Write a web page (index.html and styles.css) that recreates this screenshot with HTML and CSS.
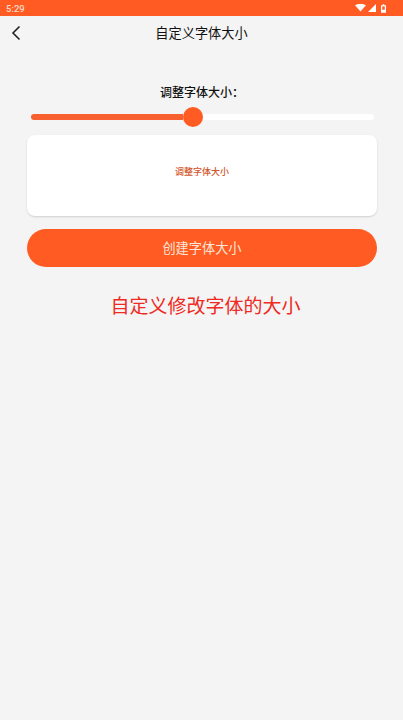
FILE: index.html
```html
<!DOCTYPE html>
<html lang="zh-CN">
<head>
    <meta charset="UTF-8">
    <meta name="viewport" content="width=device-width, initial-scale=1.0">
    <title>自定义字体大小</title>
    <link rel="stylesheet" href="styles.css">
</head>
<body>
    <div class="status-bar">
        <span class="time">5:29</span>
        <div class="status-icons">
            <svg width="11" height="8" viewBox="0 0 13 10" preserveAspectRatio="none"><path d="M0 1.600C1.800.5 4 0 6.500 0S11.200.5 13 1.600L6.500 9.500z" fill="#fff"/></svg>
            <svg class="signal" width="8" height="8" viewBox="0 0 9 9"><path d="M9 0V9H0z" fill="#fff"/></svg>
            <svg width="5" height="9" viewBox="0 0 6 10"><path d="M2 0H4V1H6V10H0V1H2z" fill="#fff"/><rect x="1.500" y="2.500" width="3" height="4" fill="#ff5b22"/></svg>
        </div>
    </div>
    <div class="nav-bar">
        <svg class="back" width="10" height="16" viewBox="0 0 10 16"><path d="M8.500 1.500L2 8l6.500 6.500" fill="none" stroke="#222" stroke-width="1.600"/></svg>
        <h1 class="nav-title">自定义字体大小</h1>
    </div>
    <div class="content">
        <p class="slider-label">调整字体大小：</p>
        <div class="slider">
            <div class="slider-fill"></div>
            <div class="slider-thumb"></div>
            <div class="slider-rest"></div>
        </div>
        <div class="preview-card">
            <span class="preview-text">调整字体大小</span>
        </div>
        <button class="create-btn">创建字体大小</button>
        <p class="hint">自定义修改字体的大小</p>
    </div>
</body>
</html>
```

FILE: styles.css
```css
* {
    box-sizing: border-box;
}
body {
    margin: 0;
    height: 720px;
    overflow: hidden;
    background: #f4f4f4;
    font-family: "Noto Sans CJK SC", "Liberation Sans", sans-serif;
}
.status-bar {
    height: 16px;
    background: #ff5b22;
    display: flex;
    justify-content: space-between;
    align-items: center;
    padding: 0 17px 0 6px;
    color: #f6d9c6;
}
.time {
    font-family: Roboto, sans-serif;
    font-size: 9.500px;
    font-weight: 500;
}
.status-icons {
    display: flex;
    align-items: center;
    gap: 5px;
}
.signal {
    margin: 0 0 0 -3px;
}
.nav-bar {
    height: 34px;
    padding-bottom: 2px;
    display: flex;
    align-items: center;
    justify-content: center;
    position: relative;
}
.back {
    position: absolute;
    left: 11px;
    top: 9px;
}
.nav-title {
    margin: 0;
    font-size: 13.200px;
    font-weight: 400;
    color: #111;
}
.content {
    padding: 0 26px 0 27px;
}
.slider-label {
    margin: 33px 0 0;
    height: 18px;
    line-height: 18px;
    text-align: center;
    font-size: 12px;
    font-weight: 500;
    color: #111;
}
.slider {
    display: flex;
    align-items: center;
    height: 20px;
    margin: 6px 3px 0 4px;
}
.slider-fill {
    width: 152px;
    height: 6px;
    background: #f8612f;
    border-radius: 3px 0 0 3px;
}
.slider-thumb {
    width: 20px;
    height: 20px;
    flex-shrink: 0;
    border-radius: 50%;
    background: #ff5b22;
}
.slider-rest {
    flex: 1;
    height: 6px;
    background: #fff;
    border-radius: 0 3px 3px 0;
}
.preview-card {
    height: 81px;
    margin-top: 8px;
    background: #fff;
    border-radius: 8px;
    box-shadow: 0 1px 2px rgba(0, 0, 0, 0.15);
    display: flex;
    justify-content: center;
    padding-top: 29px;
}
.preview-text {
    font-size: 9px;
    line-height: 16px;
    font-weight: 500;
    color: #d2562c;
}
.create-btn {
    display: block;
    width: 100%;
    height: 38px;
    margin-top: 13px;
    padding: 0 0 2px;
    border: none;
    border-radius: 19px;
    background: #ff5b22;
    color: #fbe6d8;
    font-family: inherit;
    font-size: 13.200px;
}
.hint {
    margin: 24px 0 0;
    padding-left: 7px;
    text-align: center;
    font-size: 19px;
    line-height: 28px;
    color: #ee2a22;
}
```
